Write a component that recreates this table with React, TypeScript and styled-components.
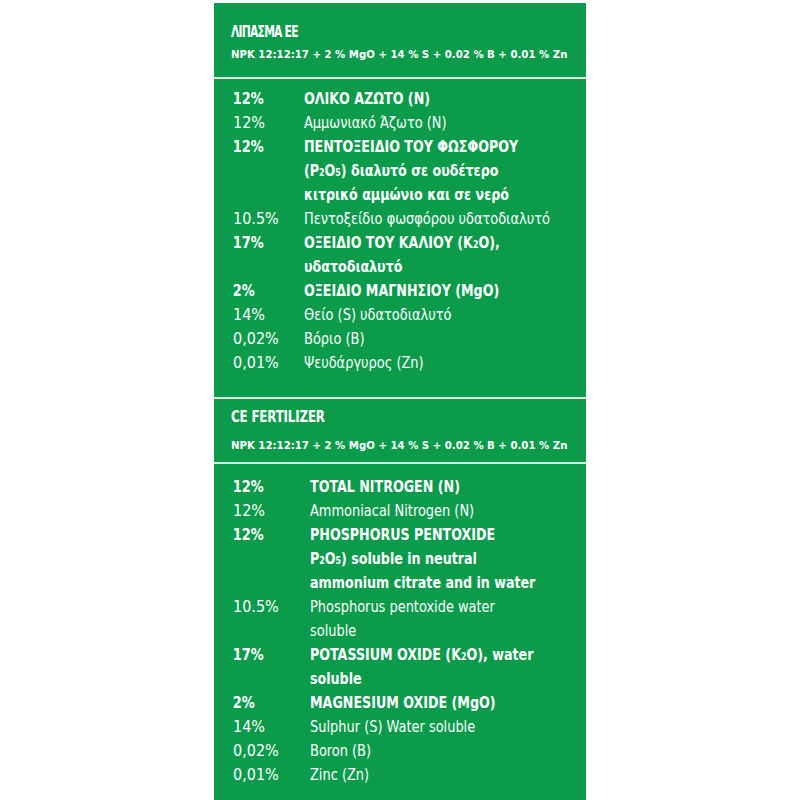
import React from "react";
import styled, { createGlobalStyle } from "styled-components";

const Global = createGlobalStyle`
  html, body { margin: 0; padding: 0; background: #ffffff; }
  body { font-family: "DejaVu Sans Condensed", "DejaVu Sans", "Liberation Sans", sans-serif; font-stretch: condensed; }
`;

const Page = styled.div`
  width: 800px;
  height: 800px;
  overflow: hidden;
  padding-top: 3px;
  padding-left: 214px;
  box-sizing: border-box;
`;

const Panel = styled.div`
  width: 372px;
  height: 797px;
  background: #0c9b4b;
  color: #ffffff;
  display: flex;
  flex-direction: column;
  overflow: hidden;
`;

const Header = styled.div<{ $top: number; $bottom: number; $gap: number }>`
  flex-shrink: 0;
  padding: ${(p) => p.$top}px 17px ${(p) => p.$bottom}px 17px;
  display: flex;
  flex-direction: column;
  gap: ${(p) => p.$gap}px;
`;

const Title = styled.div<{ $squeeze: number; $track: number }>`
  font-size: 15px;
  line-height: 18px;
  font-weight: 700;
  white-space: nowrap;
  letter-spacing: ${(p) => p.$track}px;
  transform: scaleX(${(p) => p.$squeeze});
  transform-origin: left center;
`;

const Formula = styled.div`
  font-size: 11.3px;
  line-height: 18px;
  font-weight: 700;
  white-space: nowrap;
`;

const Divider = styled.div`
  flex-shrink: 0;
  height: 2px;
  background: rgba(255, 255, 255, 0.85);
`;

const Body = styled.div<{ $top: number; $bottom: number; $col: number }>`
  flex-shrink: 0;
  padding: ${(p) => p.$top}px 17px ${(p) => p.$bottom}px 17px;
  display: grid;
  grid-template-columns: ${(p) => p.$col}px 1fr;
  font-size: 16px;
  line-height: 24px;
`;

const Pct = styled.div<{ $bold?: boolean }>`
  font-weight: ${(p) => (p.$bold ? 700 : 400)};
  white-space: nowrap;
  padding-left: 2px;
  transform: scaleX(${(p) => (p.$bold ? 0.9 : 1)});
  transform-origin: left center;
`;

const Label = styled.div<{ $bold?: boolean }>`
  font-weight: ${(p) => (p.$bold ? 700 : 400)};
  white-space: nowrap;
  transform: scaleX(${(p) => (p.$bold ? 0.88 : 0.9)});
  transform-origin: left center;
  sub {
    font-size: 10px;
    line-height: 0;
    vertical-align: baseline;
  }
`;

type Row = { pct: string; bold?: boolean; label: React.ReactNode };

const greek: Row[] = [
  { pct: "12%", bold: true, label: "ΟΛΙΚΟ ΑΖΩΤΟ (N)" },
  { pct: "12%", label: "Αμμωνιακό Άζωτο (N)" },
  {
    pct: "12%",
    bold: true,
    label: (
      <>
        ΠΕΝΤΟΞΕΙΔΙΟ ΤΟΥ ΦΩΣΦΟΡΟΥ
        <br />
        (P<sub>2</sub>O<sub>5</sub>) διαλυτό σε ουδέτερο
        <br />
        κιτρικό αμμώνιο και σε νερό
      </>
    ),
  },
  { pct: "10.5%", label: "Πεντοξείδιο φωσφόρου υδατοδιαλυτό" },
  {
    pct: "17%",
    bold: true,
    label: (
      <>
        ΟΞΕΙΔΙΟ ΤΟΥ ΚΑΛΙΟΥ (K<sub>2</sub>O),
        <br />
        υδατοδιαλυτό
      </>
    ),
  },
  { pct: "2%", bold: true, label: "ΟΞΕΙΔΙΟ ΜΑΓΝΗΣΙΟΥ (MgO)" },
  { pct: "14%", label: "Θείο (S) υδατοδιαλυτό" },
  { pct: "0,02%", label: "Βόριο (B)" },
  { pct: "0,01%", label: "Ψευδάργυρος (Zn)" },
];

const english: Row[] = [
  { pct: "12%", bold: true, label: "TOTAL NITROGEN (N)" },
  { pct: "12%", label: "Ammoniacal Nitrogen (N)" },
  {
    pct: "12%",
    bold: true,
    label: (
      <>
        PHOSPHORUS PENTOXIDE
        <br />
        P<sub>2</sub>O<sub>5</sub>) soluble in neutral
        <br />
        ammonium citrate and in water
      </>
    ),
  },
  {
    pct: "10.5%",
    label: (
      <>
        Phosphorus pentoxide water
        <br />
        soluble
      </>
    ),
  },
  {
    pct: "17%",
    bold: true,
    label: (
      <>
        POTASSIUM OXIDE (K<sub>2</sub>O), water
        <br />
        soluble
      </>
    ),
  },
  { pct: "2%", bold: true, label: "MAGNESIUM OXIDE (MgO)" },
  { pct: "14%", label: "Sulphur (S) Water soluble" },
  { pct: "0,02%", label: "Boron (B)" },
  { pct: "0,01%", label: "Zinc (Zn)" },
];

const formula = "NPK 12:12:17 + 2 % MgO + 14 % S + 0.02 % B + 0.01 % Zn";

function Rows({ rows }: { rows: Row[] }) {
  return (
    <>
      {rows.map((r, i) => (
        <React.Fragment key={i}>
          <Pct $bold={r.bold}>{r.pct}</Pct>
          <Label $bold={r.bold}>{r.label}</Label>
        </React.Fragment>
      ))}
    </>
  );
}

export default function App() {
  return (
    <>
      <Global />
      <Page>
        <Panel>
          <Header $top={20} $bottom={13} $gap={5}>
            <Title $squeeze={0.8} $track={-1}>
              ΛΙΠΑΣΜΑ ΕΕ
            </Title>
            <Formula>{formula}</Formula>
          </Header>
          <Divider />
          <Body $top={8} $bottom={22} $col={73}>
            <Rows rows={greek} />
          </Body>
          <Divider />
          <Header $top={9} $bottom={7} $gap={11}>
            <Title $squeeze={0.88} $track={-0.2}>
              CE FERTILIZER
            </Title>
            <Formula>{formula}</Formula>
          </Header>
          <Divider />
          <Body $top={11} $bottom={0} $col={79}>
            <Rows rows={english} />
          </Body>
        </Panel>
      </Page>
    </>
  );
}
